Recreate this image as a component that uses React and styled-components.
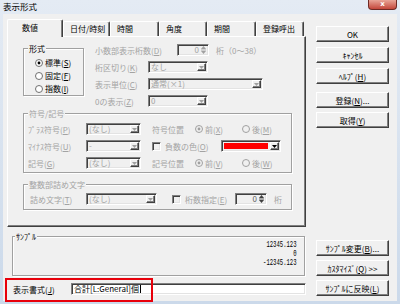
import React from 'react';
import styled, { createGlobalStyle, css } from 'styled-components';

const DIS = '#a3a3a3';

const Global = createGlobalStyle`
  html, body { margin: 0; padding: 0; background: #fff; }
  body {
    font-family: "Noto Sans CJK JP", "Noto Sans", sans-serif;
    font-size: 8px;
    line-height: 11px;
    color: #000;
  }
  * { box-sizing: border-box; }
  u { text-decoration: underline; text-underline-offset: 1px; }
`;

const sunken = css`
  border-top: 1px solid #808080;
  border-left: 1px solid #808080;
  border-right: 1px solid #fff;
  border-bottom: 1px solid #fff;
  box-shadow: inset 1px 1px 0 #404040, inset -1px -1px 0 #e3e3e3;
`;

const raised = css`
  border-top: 1px solid #fff;
  border-left: 1px solid #fff;
  border-right: 1px solid #404040;
  border-bottom: 1px solid #404040;
  box-shadow: inset -1px -1px 0 #808080;
`;

const Window = styled.div`
  position: relative;
  width: 400px;
  height: 304px;
  display: flex;
  flex-direction: column;
  background: linear-gradient(#e4ebf4, #cbd9ea);
  overflow: hidden;
`;

const TitleBar = styled.div`
  height: 14px;
  display: flex;
  align-items: flex-start;
  justify-content: space-between;
  padding-left: 3px;
`;

const Title = styled.span`
  font-size: 8.5px;
  line-height: 13px;
  color: #000;
`;

const CloseBtn = styled.div`
  width: 29px;
  height: 10px;
  margin-right: 3px;
  background: linear-gradient(#e9a597, #c4473b);
  border: 1px solid #6e2a24;
  border-top: none;
  border-radius: 0 0 4px 4px;
  color: #fff;
  font-family: "DejaVu Sans", sans-serif;
  font-weight: bold;
  font-size: 7px;
  line-height: 8px;
  text-align: center;
`;

const Body = styled.div`
  flex: 1;
  margin: 0 3px 3px 3px;
  background: #f0f0f0;
  display: flex;
  padding: 5px 0 0 4px;
`;

const LeftCol = styled.div`
  width: 299px;
  display: flex;
  flex-direction: column;
`;

const TabRow = styled.div`
  display: flex;
  align-items: flex-end;
  height: 17px;
  position: relative;
  z-index: 1;
`;

const Tab = styled.div`
  width: ${p => p.$w}px;
  height: ${p => (p.$active ? 18 : 15)}px;
  margin-bottom: ${p => (p.$active ? -1 : 0)}px;
  padding-left: ${p => (p.$active ? 14 : 6)}px;
  padding-top: ${p => (p.$active ? 2 : 1)}px;
  background: #f0f0f0;
  border-top: 1px solid #fff;
  border-left: 1px solid #fff;
  border-right: 1px solid #404040;
  box-shadow: inset -1px 0 0 #808080;
  border-radius: 2px 2px 0 0;
  white-space: nowrap;
`;

const Panel = styled.div`
  height: 191px;
  background: #f0f0f0;
  border-top: 1px solid #fff;
  border-left: 1px solid #fff;
  border-right: 1px solid #404040;
  border-bottom: 1px solid #404040;
  box-shadow: inset -1px -1px 0 #808080;
  padding: 7px 0 0 15px;
  display: flex;
  flex-direction: column;
`;

const TopSection = styled.div`
  display: flex;
  align-items: flex-start;
`;

const GroupBox = styled.div`
  position: relative;
  flex: none;
  width: ${p => p.$w}px;
  height: ${p => p.$h}px;
  margin-top: ${p => p.$mt || 0}px;
  margin-left: ${p => p.$ml || 0}px;
  padding: ${p => p.$pad || '0'};
  border: 1px solid #a0a0a0;
  box-shadow: inset 1px 1px 0 #fff, 1px 1px 0 #fff;
  display: flex;
  flex-direction: column;
  gap: ${p => p.$gap || 0}px;
`;

const Legend = styled.span`
  position: absolute;
  top: -6px;
  left: ${p => p.$left || 4}px;
  padding: 0 1px;
  background: #f0f0f0;
  color: ${p => (p.$dis ? DIS : '#000')};
  white-space: nowrap;
`;

const SettingsCol = styled.div`
  margin-left: 11px;
  display: flex;
  flex-direction: column;
  gap: 5px;
`;

const FieldRow = styled.div`
  display: flex;
  align-items: center;
  height: 12px;
`;

const Label = styled.span`
  flex: none;
  width: ${p => (p.$w ? `${p.$w}px` : 'auto')};
  margin-left: ${p => p.$ml || 0}px;
  color: ${p => (p.$dis ? DIS : '#000')};
  white-space: nowrap;
`;

const Combo = styled.div`
  ${sunken};
  flex: none;
  width: ${p => p.$w}px;
  height: 12px;
  display: flex;
  align-items: stretch;
  background: #f0f0f0;
  padding: 1px;
`;

const ComboText = styled.span`
  flex: 1;
  padding-left: 1px;
  margin-top: -2px;
  color: ${DIS};
  line-height: 11px;
  white-space: nowrap;
`;

const ColorFill = styled.span`
  flex: 1;
  margin: 1px 2px 1px 1px;
  background: ${p => p.$color};
`;

const ComboBtn = styled.span`
  ${raised};
  width: 9px;
  flex: none;
  display: flex;
  align-items: center;
  justify-content: center;
  background: #f0f0f0;
`;

const Spinner = styled.div`
  ${sunken};
  flex: none;
  width: 32px;
  height: 12px;
  display: flex;
  align-items: stretch;
  background: #f0f0f0;
  padding: 1px;
`;

const SpinText = styled.span`
  flex: 1;
  text-align: right;
  padding-right: 1px;
  margin-top: -2px;
  color: ${p => (p.$dark ? '#606060' : DIS)};
  line-height: 11px;
`;

const SpinBtn = styled.span`
  width: 7px;
  flex: none;
  display: flex;
  align-items: center;
  justify-content: center;
`;

const RadioItem = styled.label`
  display: flex;
  align-items: center;
  flex: none;
  width: ${p => (p.$w ? `${p.$w}px` : 'auto')};
  color: ${p => (p.$dis ? DIS : '#000')};
  white-space: nowrap;
  height: 11px;
`;

const RadioText = styled.span`
  margin-left: ${p => (p.$gap === undefined ? 2 : p.$gap)}px;
`;

const CheckItem = styled.label`
  display: flex;
  align-items: center;
  flex: none;
  width: ${p => p.$w}px;
  margin-left: ${p => p.$ml || 0}px;
  color: ${DIS};
  white-space: nowrap;
`;

const CheckBox = styled.span`
  ${sunken};
  width: 9px;
  height: 9px;
  flex: none;
  background: #f0f0f0;
  margin-right: 4px;
`;

const RadioCol = styled.div`
  display: flex;
  flex-direction: column;
  gap: 2px;
`;

const Numbers = styled.div`
  padding: 4px 12px 0 0;
  text-align: right;
  font-family: "Liberation Mono", "DejaVu Sans Mono", monospace;
  font-size: 9px;
  line-height: 9px;
  transform: scaleX(0.62);
  transform-origin: right top;
`;

const FormatRow = styled.div`
  display: flex;
  align-items: center;
  height: 12px;
  margin-top: 7px;
`;

const TextInput = styled.div`
  ${sunken};
  flex: 1;
  height: 12px;
  background: #fff;
  padding: 0 2px;
  line-height: 10px;
  white-space: nowrap;
  display: flex;
  align-items: center;
`;

const Caret = styled.span`
  width: 1px;
  height: 8px;
  background: #000;
  margin-left: 1px;
`;

const RightCol = styled.div`
  margin-left: 10px;
  width: 73px;
  display: flex;
  flex-direction: column;
  padding: 7px 0 5px 0;
`;

const Button = styled.div`
  ${raised};
  height: 16px;
  margin-top: ${p => p.$mt || 0}px;
  background: #f0f0f0;
  display: flex;
  align-items: center;
  justify-content: center;
  white-space: nowrap;
  line-height: 11px;
`;

const Spacer = styled.div`
  flex: 1;
`;

const Highlight = styled.div`
  position: absolute;
  left: 5px;
  top: 278px;
  width: 148px;
  height: 24px;
  border: 2px solid #e8000b;
  pointer-events: none;
`;

const Arrow = ({ dis }) => (
  <svg width="5" height="3" viewBox="0 0 5 3">
    <polygon points="0,0 5,0 2.5,3" fill={dis ? '#a0a0a0' : '#000'} />
  </svg>
);

const SpinArrows = ({ dark }) => (
  <svg width="5" height="8" viewBox="0 0 5 8">
    <polygon points="2.5,0 5,3 0,3" fill={dark ? '#404040' : '#a0a0a0'} />
    <rect x="0" y="3.6" width="5" height="0.8" fill={dark ? '#404040' : '#a0a0a0'} />
    <polygon points="0,5 5,5 2.5,8" fill={dark ? '#404040' : '#a0a0a0'} />
  </svg>
);

const RadioIcon = ({ checked, dis }) => (
  <svg width="8" height="8" viewBox="0 0 8 8">
    <circle cx="4" cy="4" r="3.5" fill={dis ? '#f0f0f0' : '#fff'} stroke={dis ? '#a0a0a0' : '#707070'} strokeWidth="1" />
    {checked && <circle cx="4" cy="4" r="1.4" fill={dis ? '#a0a0a0' : '#000'} />}
  </svg>
);

const ComboBox = ({ w, text, color }) => (
  <Combo $w={w}>
    {color ? <ColorFill $color={color} /> : <ComboText>{text}</ComboText>}
    <ComboBtn>
      <Arrow dis={!color} />
    </ComboBtn>
  </Combo>
);

const SpinBox = ({ dark }) => (
  <Spinner>
    <SpinText $dark={dark}>0</SpinText>
    <SpinBtn>
      <SpinArrows dark={dark} />
    </SpinBtn>
  </Spinner>
);

const Radio = ({ w, checked, dis, children, gap }) => (
  <RadioItem $w={w} $dis={dis}>
    <RadioIcon checked={checked} dis={dis} />
    <RadioText $gap={gap}>{children}</RadioText>
  </RadioItem>
);

const tabs = [
  { t: '数値', w: 56, active: true },
  { t: '日付/時刻', w: 47 },
  { t: '時間', w: 49 },
  { t: '角度', w: 48 },
  { t: '期間', w: 49 },
  { t: '登録呼出', w: 48 },
];

export default function App() {
  return (
    <>
      <Global />
      <Window>
        <TitleBar>
          <Title>表示形式</Title>
          <CloseBtn>x</CloseBtn>
        </TitleBar>
        <Body>
          <LeftCol>
            <TabRow>
              {tabs.map(tb => (
                <Tab key={tb.t} $w={tb.w} $active={tb.active}>
                  {tb.t}
                </Tab>
              ))}
            </TabRow>
            <Panel>
              <TopSection>
                <GroupBox $w={61} $h={48} $mt={4} $pad="8px 0 0 11px">
                  <Legend $left={4}>形式</Legend>
                  <RadioCol>
                    <Radio checked>
                      標準(<u>S</u>)
                    </Radio>
                    <Radio>
                      固定(<u>F</u>)
                    </Radio>
                    <Radio>
                      指数(<u>I</u>)
                    </Radio>
                  </RadioCol>
                </GroupBox>
                <SettingsCol>
                  <FieldRow>
                    <Label $w={82} $dis>
                      小数部表示桁数(<u>D</u>)
                    </Label>
                    <SpinBox />
                    <Label $ml={7} $dis>
                      桁（0～38）
                    </Label>
                  </FieldRow>
                  <FieldRow>
                    <Label $w={53} $dis>
                      桁区切り(<u>K</u>)
                    </Label>
                    <ComboBox w={60} text="なし" />
                  </FieldRow>
                  <FieldRow>
                    <Label $w={53} $dis>
                      表示単位(<u>C</u>)
                    </Label>
                    <ComboBox w={115} text="通常(×1)" />
                  </FieldRow>
                  <FieldRow>
                    <Label $w={53} $dis>
                      0の表示(<u>Z</u>)
                    </Label>
                    <ComboBox w={60} text="0" />
                  </FieldRow>
                </SettingsCol>
              </TopSection>

              <GroupBox $w={269} $h={60} $mt={6} $pad="9px 0 0 4px" $gap={5}>
                <Legend $dis $left={4}>符号/記号</Legend>
                <FieldRow>
                  <Label $w={58} $dis>
                    ﾌﾟﾗｽ符号(<u>P</u>)
                  </Label>
                  <ComboBox w={55} text="(なし)" />
                  <Label $w={43} $ml={11} $dis>
                    符号位置
                  </Label>
                  <Radio w={47} checked dis>
                    前(<u>X</u>)
                  </Radio>
                  <Radio dis>
                    後(<u>M</u>)
                  </Radio>
                </FieldRow>
                <FieldRow>
                  <Label $w={58} $dis>
                    ﾏｲﾅｽ符号(<u>U</u>)
                  </Label>
                  <ComboBox w={55} text="-" />
                  <CheckItem $w={69} $ml={11}>
                    <CheckBox />
                    負数の色(<u>O</u>)
                  </CheckItem>
                  <ComboBox w={60} color="#ff0000" />
                </FieldRow>
                <FieldRow>
                  <Label $w={58} $dis>
                    記号(<u>G</u>)
                  </Label>
                  <ComboBox w={55} text="(なし)" />
                  <Label $w={43} $ml={11} $dis>
                    記号位置
                  </Label>
                  <Radio w={47} checked dis>
                    前(<u>V</u>)
                  </Radio>
                  <Radio dis>
                    後(<u>W</u>)
                  </Radio>
                </FieldRow>
              </GroupBox>

              <GroupBox $w={269} $h={26} $mt={11} $pad="8px 0 0 6px">
                <Legend $dis $left={4}>整数部詰め文字</Legend>
                <FieldRow>
                  <Label $w={56} $dis>
                    詰め文字(<u>T</u>)
                  </Label>
                  <ComboBox w={71} text="(なし)" />
                  <CheckItem $w={63} $ml={15}>
                    <CheckBox />
                    桁数指定(<u>E</u>)
                  </CheckItem>
                  <SpinBox dark />
                  <Label $ml={7} $dis>
                    桁
                  </Label>
                </FieldRow>
              </GroupBox>
            </Panel>

            <GroupBox $w={293} $h={40} $mt={9} $ml={5}>
              <Legend $left={2}>ｻﾝﾌﾟﾙ</Legend>
              <Numbers>
                <div>12345.123</div>
                <div>0</div>
                <div>-12345.123</div>
              </Numbers>
            </GroupBox>

            <FormatRow>
              <Label $w={58} $ml={6}>
                表示書式(<u>J</u>)
              </Label>
              <TextInput>
                合計[L:General]個
                <Caret />
              </TextInput>
            </FormatRow>
          </LeftCol>

          <RightCol>
            <Button>OK</Button>
            <Button $mt={5}>ｷｬﾝｾﾙ</Button>
            <Button $mt={5}>
              ﾍﾙﾌﾟ(<u>H</u>)
            </Button>
            <Button $mt={8}>
              登録(<u>N</u>)...
            </Button>
            <Button $mt={4}>
              取得(<u>Y</u>)
            </Button>
            <Spacer />
            <Button>
              ｻﾝﾌﾟﾙ変更(<u>B</u>)...
            </Button>
            <Button $mt={4}>
              ｶｽﾀﾏｲｽﾞ(<u>Q</u>) &gt;&gt;
            </Button>
            <Button $mt={4}>
              ｻﾝﾌﾟﾙに反映(<u>L</u>)
            </Button>
          </RightCol>
        </Body>
        <Highlight />
      </Window>
    </>
  );
}
